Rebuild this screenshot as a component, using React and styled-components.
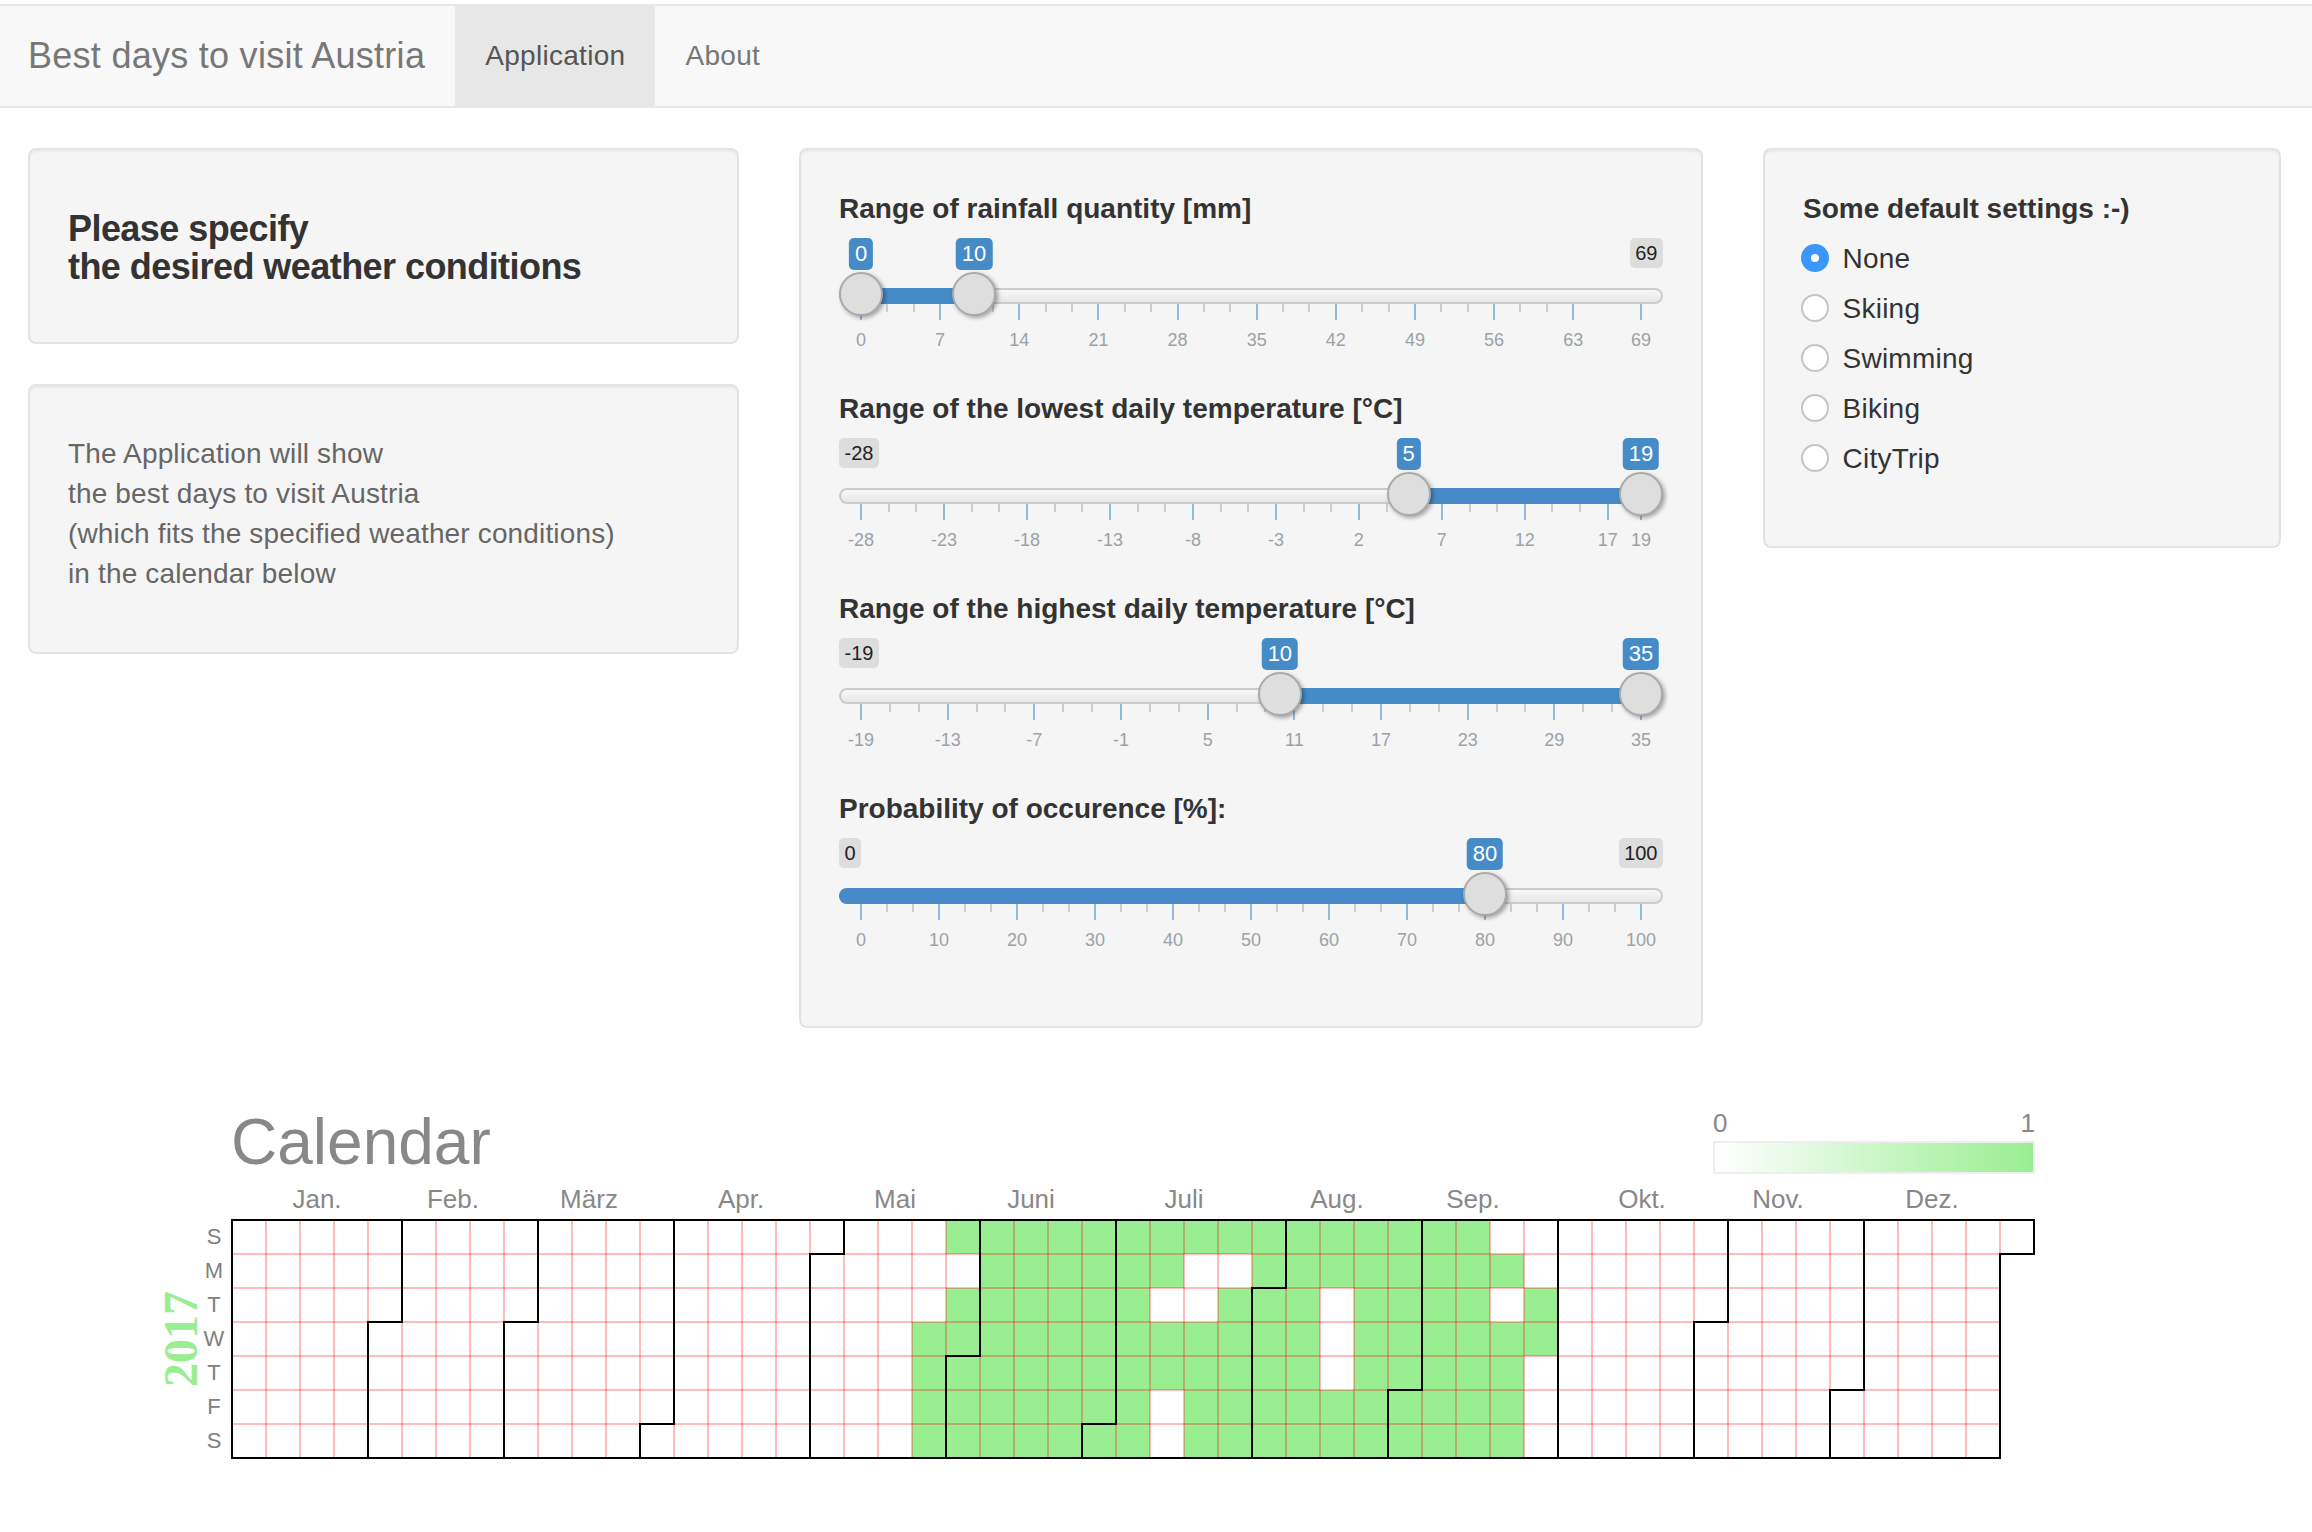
import styled, { createGlobalStyle } from "styled-components";

const GlobalStyle = createGlobalStyle`
  body {
    margin: 0;
    background: #fff;
    color: #333;
    font-family: "Liberation Sans", Arial, sans-serif;
    font-size: 28px;
  }
`;

const Navbar = styled.nav`
  display: flex;
  height: 100px;
  margin-top: 4px;
  background: #f8f8f8;
  border-top: 2px solid #e7e7e7;
  border-bottom: 2px solid #e7e7e7;
`;

const Brand = styled.a`
  padding: 0 30px 0 28px;
  font-size: 36px;
  letter-spacing: 0.27px;
  line-height: 100px;
  color: #777;
`;

const NavItem = styled.a`
  padding: 0 30px;
  font-size: 28px;
  letter-spacing: 0.3px;
  line-height: 100px;
  color: ${(p) => (p.$active ? "#555" : "#777")};
  background: ${(p) => (p.$active ? "#e7e7e7" : "transparent")};
`;

const Main = styled.main`
  display: grid;
  grid-template-columns: 711px 904px 518px;
  column-gap: 60px;
  align-items: start;
  padding: 40px 28px 0;
`;

const Column = styled.div`
  display: flex;
  flex-direction: column;
  gap: 40px;
`;

const Well = styled.section`
  box-sizing: border-box;
  padding: 38px;
  background: #f5f5f5;
  border: 2px solid #e3e3e3;
  border-radius: 8px;
  box-shadow: inset 0 2px 2px rgba(0, 0, 0, 0.05);
`;

const Heading = styled.h4`
  margin: 22px 0 18px;
  font-size: 36px;
  line-height: 38px;
  font-weight: 700;
  letter-spacing: -0.56px;
  color: #333;
`;

const Intro = styled.p`
  margin: 10px 0 20px;
  font-size: 28px;
  line-height: 40px;
  letter-spacing: 0.15px;
  color: #666;
`;

const FieldLabel = styled.div`
  height: 40px;
  font-size: 28px;
  line-height: 41px;
  font-weight: 700;
  color: #333;
`;

const SliderField = styled.div`
  height: 200px;
`;

const SliderBody = styled.div`
  position: relative;
  height: 160px;
`;

const Track = styled.div`
  position: absolute;
  top: 60px;
  left: 0;
  right: 0;
  box-sizing: border-box;
  height: 16px;
  border: 2px solid #ccc;
  border-radius: 8px;
  background: linear-gradient(to bottom, #f8f8f8, #e6e6e6);
`;

const Bar = styled.div`
  position: absolute;
  top: 60px;
  height: 16px;
  background: #458bc8;
  border-radius: ${(p) => (p.$roundLeft ? "8px 0 0 8px" : "0")};
`;

const Handle = styled.div`
  position: absolute;
  top: 44px;
  box-sizing: border-box;
  width: 44px;
  height: 44px;
  margin-left: -22px;
  border: 2px solid #aaa;
  border-radius: 50%;
  background: #dedede;
  box-shadow: 2px 2px 4px rgba(0, 0, 0, 0.35);
  z-index: 2;
`;

const ValueBubble = styled.span`
  position: absolute;
  top: 10px;
  padding: 0 6px;
  height: 32px;
  font-size: 22px;
  line-height: 32px;
  color: #fff;
  background: #458bc8;
  border-radius: 5px;
  transform: translateX(-50%);
`;

const LimitBubble = styled.span`
  position: absolute;
  top: 10px;
  ${(p) => (p.$end ? "right: 0;" : "left: 0;")}
  padding: 0 5.5px;
  height: 30px;
  font-size: 20px;
  line-height: 30px;
  color: #222;
  background: #ddd;
  border-radius: 5px;
`;

const Tick = styled.i`
  position: absolute;
  top: 76px;
  width: 2px;
  margin-left: -1px;
  height: ${(p) => (p.$major ? "16px" : "8px")};
  background: ${(p) => (p.$major ? "#90b9dd" : "#ccc")};
`;

const TickLabel = styled.span`
  position: absolute;
  top: 102px;
  font-size: 18px;
  line-height: 20px;
  color: #9aa2a9;
  transform: translateX(-50%);
`;

const RadioTitle = styled(FieldLabel)`
  margin-bottom: 5px;
`;

const RadioRow = styled.label`
  display: flex;
  align-items: center;
  gap: 13.5px;
  height: 50px;
  margin-left: -2px;
  font-size: 28px;
  letter-spacing: 0.25px;
  color: #333;
`;

const RadioText = styled.span`
  padding-top: 2px;
`;

const RadioGroup = styled.div`
  margin-bottom: 25px;
`;

const RadioDot = styled.input`
  appearance: none;
  box-sizing: border-box;
  width: 28px;
  height: 28px;
  margin: 0;
  border: 2px solid #c4c4c4;
  border-radius: 50%;
  background: #fff;
  &:checked {
    border: 10px solid #3b96fb;
  }
`;

const CalendarSection = styled.section`
  margin-top: 72px;
  padding-bottom: 62px;
`;

const CalendarHead = styled.div`
  display: flex;
  justify-content: space-between;
  align-items: flex-end;
  box-sizing: border-box;
  width: 2035px;
  height: 80px;
  padding-left: 231px;
`;

const CalendarTitle = styled.h2`
  height: 80px;
  margin: 0;
  font-size: 64px;
  line-height: 84px;
  font-weight: 400;
  color: #888;
`;

const Legend = styled.div`
  width: 322px;
  margin-bottom: 6px;
`;

const LegendScale = styled.div`
  display: flex;
  justify-content: space-between;
  margin-bottom: 3px;
  font-size: 26px;
  line-height: 30px;
  color: #888;
`;

const LegendBar = styled.div`
  box-sizing: border-box;
  height: 33px;
  border: 2px solid #eee;
  background: linear-gradient(to right, #fff, #99ee91);
`;

const ChartSvg = styled.svg`
  display: block;
`;

const MonthText = styled.text`
  font-size: 26px;
  fill: #888;
  text-anchor: middle;
`;

const DayText = styled.text`
  font-size: 22px;
  fill: #808080;
  text-anchor: middle;
`;

const YearText = styled.text`
  font-family: "Liberation Serif", "Times New Roman", serif;
  font-size: 48px;
  font-weight: 700;
  fill: #99ee91;
  text-anchor: middle;
`;

const SPAN = 780;
const HANDLE_R = 22;

const sliders = [
  { label: "Range of rainfall quantity [mm]", min: 0, max: 69, from: 0, to: 10, grid: [0, 7, 14, 21, 28, 35, 42, 49, 56, 63, 69] },
  { label: "Range of the lowest daily temperature [°C]", min: -28, max: 19, from: 5, to: 19, grid: [-28, -23, -18, -13, -8, -3, 2, 7, 12, 17, 19] },
  { label: "Range of the highest daily temperature [°C]", min: -19, max: 35, from: 10, to: 35, grid: [-19, -13, -7, -1, 5, 11, 17, 23, 29, 35] },
  { label: "Probability of occurence [%]:", min: 0, max: 100, to: 80, grid: [0, 10, 20, 30, 40, 50, 60, 70, 80, 90, 100] },
];

const Slider = ({ label, min, max, from, to, grid }) => {
  const pos = (v) => HANDLE_R + ((v - min) / (max - min)) * SPAN;
  const single = from === undefined;
  const step = grid[1] - grid[0];
  const minors = [];
  grid.slice(0, -1).forEach((v, i) => {
    if (grid[i + 1] - v === step) {
      minors.push(v + step / 3, v + (2 * step) / 3);
    }
  });

  return (
    <SliderField>
      <FieldLabel>{label}</FieldLabel>
      <SliderBody>
        <Track />
        <Bar
          $roundLeft={single}
          style={{
            left: single ? 0 : pos(from),
            width: single ? pos(to) : pos(to) - pos(from),
          }}
        />
        {from !== min && <LimitBubble>{min}</LimitBubble>}
        {to !== max && <LimitBubble $end>{max}</LimitBubble>}
        {!single && <ValueBubble style={{ left: pos(from) }}>{from}</ValueBubble>}
        <ValueBubble style={{ left: pos(to) }}>{to}</ValueBubble>
        {minors.map((v) => (
          <Tick key={v} style={{ left: pos(v) }} />
        ))}
        {grid.map((v) => (
          <Tick key={v} $major style={{ left: pos(v) }} />
        ))}
        {grid.map((v) => (
          <TickLabel key={v} style={{ left: pos(v) }}>
            {v}
          </TickLabel>
        ))}
        {!single && <Handle style={{ left: pos(from) }} />}
        <Handle style={{ left: pos(to) }} />
      </SliderBody>
    </SliderField>
  );
};

// calendar chart, in page coordinates (viewBox starts at the chart's top)
const CELL = 34;
const LEFT = 232;
const TOP = 1220;
const BOTTOM = TOP + 7 * CELL;
const cx = (c) => LEFT + c * CELL;
const cy = (r) => TOP + r * CELL;

const greenRuns = [
  [[21, 36]],
  [[22, 27], [30, 37]],
  [[21, 26], [29, 31], [33, 36], [38, 38]],
  [[20, 31], [33, 38]],
  [[20, 31], [33, 37]],
  [[20, 26], [28, 37]],
  [[20, 26], [28, 37]],
];

const months = [
  ["Jan.", 317], ["Feb.", 453], ["März", 589], ["Apr.", 741], ["Mai", 895], ["Juni", 1031],
  ["Juli", 1184], ["Aug.", 1337], ["Sep.", 1473], ["Okt.", 1642], ["Nov.", 1778], ["Dez.", 1932],
];

const days = ["S", "M", "T", "W", "T", "F", "S"];

const monthLine = (m) => {
  const doy = (Date.UTC(2017, m, 1) - Date.UTC(2017, 0, 1)) / 86400000;
  const col = Math.floor(doy / 7);
  const row = doy % 7;
  if (row === 0) return `M${cx(col)} ${TOP}V${BOTTOM}`;
  return `M${cx(col + 1)} ${TOP}V${cy(row)}H${cx(col)}V${BOTTOM}`;
};

const CalendarChart = () => (
  <ChartSvg width="2040" height="290" viewBox="0 1180 2040 290">
    {months.map(([name, x]) => (
      <MonthText key={name} x={x} y={1208}>
        {name}
      </MonthText>
    ))}
    {days.map((d, r) => (
      <DayText key={r} x={214} y={cy(r) + 24}>
        {d}
      </DayText>
    ))}
    <YearText transform="translate(197 1339) rotate(-90)">2017</YearText>

    {greenRuns.map((runs, r) =>
      runs.map(([a, b]) => (
        <rect key={`${r}-${a}`} x={cx(a)} y={cy(r)} width={(b - a + 1) * CELL} height={CELL} fill="#99ee91" />
      ))
    )}

    <g stroke="#ff0000" strokeOpacity="0.27" strokeWidth="2" fill="none">
      {Array.from({ length: 52 }, (_, i) => (
        <path key={i} d={`M${cx(i + 1)} ${TOP}V${BOTTOM}`} />
      ))}
      {[1, 2, 3, 4, 5, 6].map((r) => (
        <path key={r} d={`M${LEFT} ${cy(r)}H${cx(52)}`} />
      ))}
    </g>

    <g stroke="#000" strokeWidth="2" fill="none">
      {Array.from({ length: 11 }, (_, i) => (
        <path key={i} d={monthLine(i + 1)} />
      ))}
      <path d={`M${LEFT} ${TOP}H${cx(53)}V${cy(1)}H${cx(52)}V${BOTTOM}H${LEFT}Z`} />
    </g>
  </ChartSvg>
);

const presets = ["None", "Skiing", "Swimming", "Biking", "CityTrip"];

const App = () => {
  return (
    <div>
      <GlobalStyle />
      <Navbar>
        <Brand>Best days to visit Austria</Brand>
        <NavItem $active>Application</NavItem>
        <NavItem>About</NavItem>
      </Navbar>

      <Main>
        <Column>
          <Well>
            <Heading>
              Please specify
              <br />
              the desired weather conditions
            </Heading>
          </Well>
          <Well>
            <Intro>
              The Application will show
              <br />
              the best days to visit Austria
              <br />
              (which fits the specified weather conditions)
              <br />
              in the calendar below
            </Intro>
          </Well>
        </Column>

        <Well>
          {sliders.map((s) => (
            <Slider key={s.label} {...s} />
          ))}
        </Well>

        <Well>
          <RadioTitle>Some default settings :-)</RadioTitle>
          <RadioGroup>
            {presets.map((name) => (
              <RadioRow key={name}>
                <RadioDot type="radio" name="preset" defaultChecked={name === "None"} />
                <RadioText>{name}</RadioText>
              </RadioRow>
            ))}
          </RadioGroup>
        </Well>
      </Main>

      <CalendarSection>
        <CalendarHead>
          <CalendarTitle>Calendar</CalendarTitle>
          <Legend>
            <LegendScale>
              <span>0</span>
              <span>1</span>
            </LegendScale>
            <LegendBar />
          </Legend>
        </CalendarHead>
        <CalendarChart />
      </CalendarSection>
    </div>
  );
};

export default App;
